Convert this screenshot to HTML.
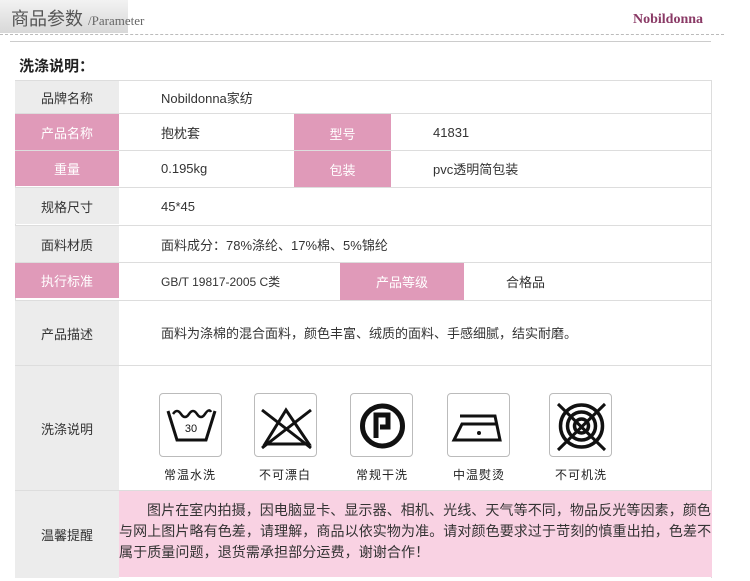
<!DOCTYPE html>
<html><head><meta charset="utf-8"><style>
*{margin:0;padding:0;box-sizing:border-box}
body{width:750px;height:581px;background:#fff;position:relative;overflow:hidden;font-family:"Liberation Sans","Noto Sans CJK SC",sans-serif;color:#333;font-size:13px}
.a{position:absolute}
.lbl{position:absolute;left:15px;width:104px;background:#ececec;display:flex;align-items:center;justify-content:center;color:#333}
.pk{position:absolute;background:#e09ab9;color:#fff;display:flex;align-items:center;justify-content:center}
.hl{position:absolute;left:15px;width:697px;height:1px;background:#ddd}
.t{position:absolute;display:flex;align-items:center}
.ic{position:absolute;top:393px;width:63px;height:64px;border:1px solid #bbb;border-radius:4px;background:#fff}
.il{position:absolute;top:466px;font-size:12px;color:#222;letter-spacing:1px}
</style></head><body>
<div class="a" style="left:0;top:0;width:128px;height:33px;background:linear-gradient(#f2f2f2,#d8d8d8)"></div>
<div class="a" style="left:11px;top:5px;font-size:18px;color:#555">商品参数 <span style="font-family:'Liberation Serif',serif;font-size:13px;color:#666">/Parameter</span></div>
<div class="a" style="left:633px;top:12px;font-family:'Liberation Serif',serif;font-weight:bold;font-size:14px;color:#8a3a66">Nobildonna</div>
<div class="a" style="left:0;top:34px;width:724px;border-top:1px dashed #bbb"></div>
<div class="a" style="left:10px;top:41px;width:701px;height:1px;background:#ccc"></div>
<div class="a" style="left:19px;top:55px;font-size:15px;font-weight:bold;color:#222">洗涤说明：</div>
<div class="a" style="left:15px;top:80px;width:697px;height:498px;border:1px solid #ddd;border-bottom:none"></div>
<div class="lbl" style="top:81px;height:32px">品牌名称</div>
<div class="t" style="left:161px;top:81px;height:32px">Nobildonna家纺</div>
<div class="hl" style="top:113px"></div>
<div class="pk" style="left:15px;top:114px;width:104px;height:36px">产品名称</div>
<div class="t" style="left:161px;top:114px;height:36px">抱枕套</div>
<div class="pk" style="left:294px;top:114px;width:97px;height:73px;align-items:flex-start;padding-top:10px">型号</div>
<div class="pk" style="left:294px;top:150px;width:97px;height:37px;border-top:1px solid #eed">包装</div>
<div class="t" style="left:433px;top:114px;height:36px">41831</div>
<div class="hl" style="top:150px"></div>
<div class="pk" style="left:15px;top:151px;width:104px;height:35px">重量</div>
<div class="t" style="left:161px;top:151px;height:35px">0.195kg</div>
<div class="t" style="left:433px;top:151px;height:35px">pvc透明简包装</div>
<div class="hl" style="top:187px"></div>
<div class="lbl" style="top:188px;height:36px">规格尺寸</div>
<div class="t" style="left:161px;top:188px;height:36px">45*45</div>
<div class="hl" style="top:225px"></div>
<div class="lbl" style="top:226px;height:36px">面料材质</div>
<div class="t" style="left:161px;top:226px;height:36px">面料成分：78%涤纶、17%棉、5%锦纶</div>
<div class="hl" style="top:262px"></div>
<div class="pk" style="left:15px;top:263px;width:104px;height:35px">执行标准</div>
<div class="t" style="left:161px;top:263px;height:36px;font-size:12px">GB/T 19817-2005 C类</div>
<div class="pk" style="left:340px;top:263px;width:124px;height:37px">产品等级</div>
<div class="t" style="left:506px;top:263px;height:36px">合格品</div>
<div class="hl" style="top:300px"></div>
<div class="lbl" style="top:301px;height:64px">产品描述</div>
<div class="t" style="left:161px;top:301px;height:62px">面料为涤棉的混合面料，颜色丰富、绒质的面料、手感细腻，结实耐磨。</div>
<div class="hl" style="top:365px"></div>
<div class="lbl" style="top:366px;height:124px">洗涤说明</div>
<div class="ic" style="left:159px"><svg width="63" height="64" viewBox="0 0 63 64"><path d="M8 17 L17 46 H46 L55 17" fill="none" stroke="#111" stroke-width="3"/><path d="M13 20 q4 -6 8 0 q4 6 8 0 q4 -6 8 0 q4 6 8 0 q4 -6 6 -2" fill="none" stroke="#111" stroke-width="2.5"/><text x="31" y="38" font-size="11" text-anchor="middle" font-family="Liberation Sans" fill="#111">30</text></svg></div>
<div class="ic" style="left:254px"><svg width="63" height="64" viewBox="0 0 63 64"><path d="M31 16 L10 50 H54 Z" fill="none" stroke="#111" stroke-width="3"/><path d="M7 16 L56 54 M56 16 L7 54" stroke="#111" stroke-width="3"/></svg></div>
<div class="ic" style="left:350px"><svg width="63" height="64" viewBox="0 0 63 64"><circle cx="31.5" cy="32" r="20" fill="none" stroke="#111" stroke-width="5"/><path d="M25 44 V21 H37 V33 H29" fill="none" stroke="#111" stroke-width="5"/></svg></div>
<div class="ic" style="left:447px"><svg width="63" height="64" viewBox="0 0 63 64"><path d="M12 22 H47 L52 46 H6 L14 30 H49" fill="none" stroke="#111" stroke-width="3"/><circle cx="31" cy="39" r="2" fill="#111"/></svg></div>
<div class="ic" style="left:549px"><svg width="63" height="64" viewBox="0 0 63 64"><circle cx="31.5" cy="32" r="21" fill="none" stroke="#111" stroke-width="3.5"/><circle cx="31.5" cy="32" r="14" fill="none" stroke="#111" stroke-width="3.5"/><circle cx="31.5" cy="32" r="7" fill="none" stroke="#111" stroke-width="3.5"/><path d="M8 10 L55 56 M55 10 L8 56" stroke="#111" stroke-width="3"/></svg></div>
<div class="il" style="left:164px">常温水洗</div>
<div class="il" style="left:259px">不可漂白</div>
<div class="il" style="left:356px">常规干洗</div>
<div class="il" style="left:453px">中温熨烫</div>
<div class="il" style="left:555px">不可机洗</div>
<div class="hl" style="top:490px"></div>
<div class="lbl" style="top:491px;height:87px">温馨提醒</div>
<div class="a" style="left:119px;top:491px;width:593px;height:86px;background:#f9d2e3;padding:9px 0 0 0;font-size:14px;letter-spacing:0.1px;line-height:21px;color:#333;white-space:nowrap;overflow:hidden"><span style="padding-left:28px"></span>图片在室内拍摄，因电脑显卡、显示器、相机、光线、天气等不同，物品反光等因素，颜色<br>与网上图片略有色差，请理解，商品以依实物为准。请对颜色要求过于苛刻的慎重出拍，色差不<br>属于质量问题，退货需承担部分运费，谢谢合作！</div>
</body></html>
